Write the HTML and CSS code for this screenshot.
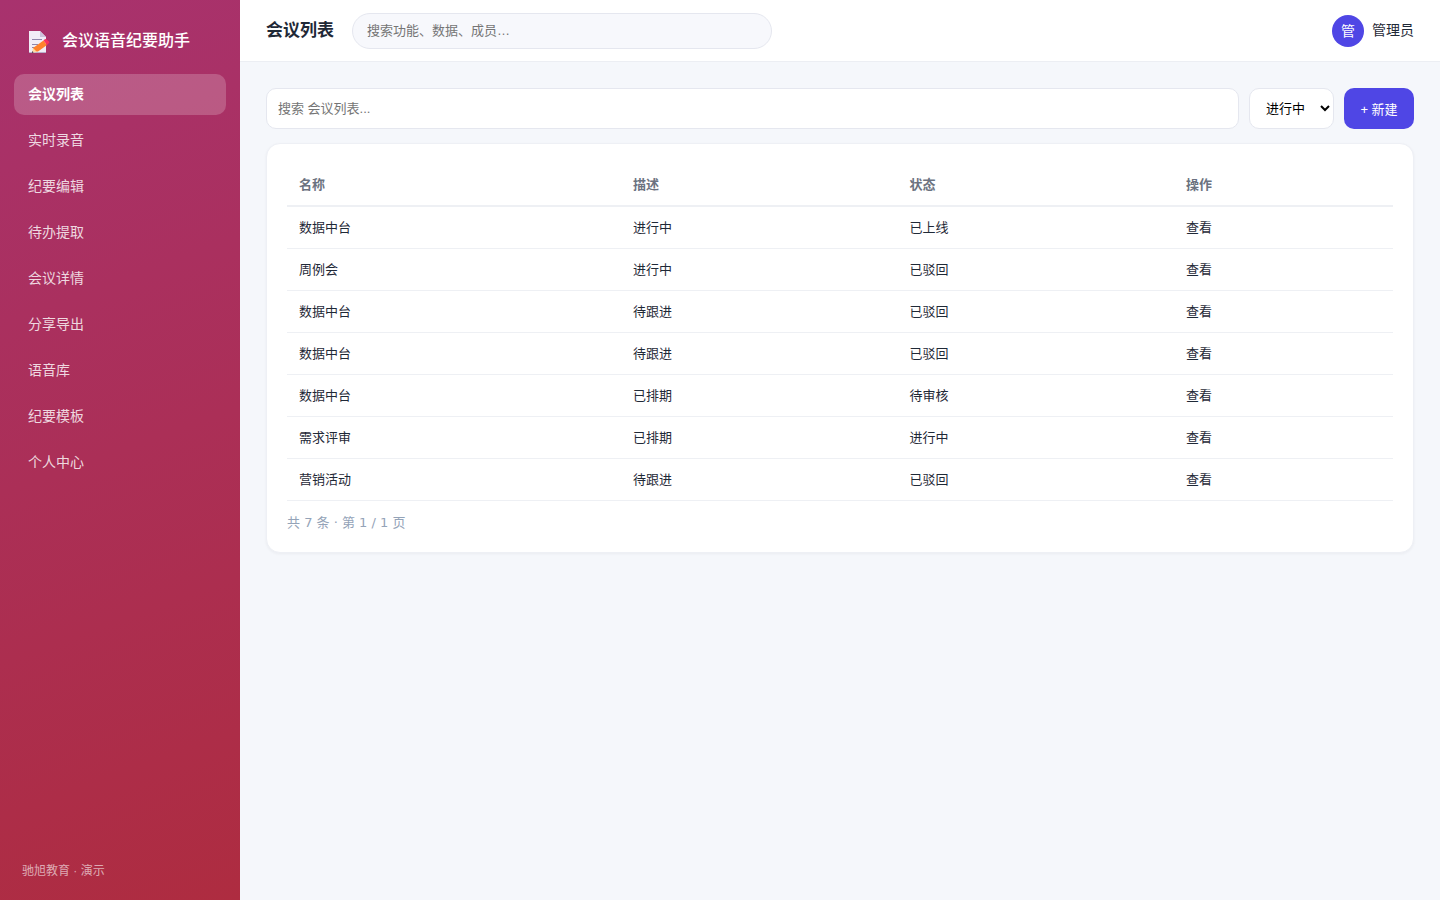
FILE: index.html
```html
<!DOCTYPE html>
<html lang="zh-CN">
<head>
  <meta charset="UTF-8">
  <meta name="viewport" content="width=device-width, initial-scale=1">
  <title>会议语音纪要助手</title>
  <link rel="stylesheet" href="styles.css">
</head>
<body>

  <div class="app">
    <aside class="sidebar">
      <div class="brand">
        <svg class="brand-icon" viewBox="0 0 22 24" aria-hidden="true">
          <path d="M1 1h11l6 6v16H1z" fill="#f1edf8"/>
          <path d="M12 1l6 6h-6z" fill="#cdc3dc"/>
          <path d="M1 22h17v1H1z" fill="#b9aecb"/>
          <path d="M4 9.500h10M4 14.500h6M4 17.500h4" stroke="#8f86ad" stroke-width="1" fill="none"/>
          <path d="M5 18l10.500-7.500 3.500 4.500-9 6.500-5 .5z" fill="#ff822d"/>
          <path d="M5 18l4 4-5 .8z" fill="#ffd9a0"/>
          <path d="M4.400 20.900l1.200 1.500-1.800.5z" fill="#38304a"/>
          <path d="M15.500 10.500l1.300-1.200q.8-.6 1.500 0l2.700 2.200q.7.700 0 1.500l-2 2z" fill="#f8315f"/>
        </svg>
        <span>会议语音纪要助手</span>
      </div>
      <nav class="nav">
        <a class="active" href="#">会议列表</a>
        <a href="#">实时录音</a>
        <a href="#">纪要编辑</a>
        <a href="#">待办提取</a>
        <a href="#">会议详情</a>
        <a href="#">分享导出</a>
        <a href="#">语音库</a>
        <a href="#">纪要模板</a>
        <a href="#">个人中心</a>
      </nav>
      <div class="side-foot">驰旭教育 · 演示</div>
    </aside>

    <div class="main">
      <header class="topbar">
        <h1>会议列表</h1>
        <input class="global-search" type="search" placeholder="搜索功能、数据、成员…" aria-label="全局搜索">
        <div class="user">
          <span class="avatar">管</span>
          <span>管理员</span>
        </div>
      </header>

      <main class="content">
        <div class="toolbar">
          <input type="text" placeholder="搜索 会议列表..." aria-label="搜索会议列表">
          <select aria-label="状态">
            <option>进行中</option>
            <option>待跟进</option>
            <option>已排期</option>
          </select>
          <button class="btn" type="button">+ 新建</button>
        </div>

        <section class="card">
          <table>
            <thead>
              <tr><th class="col-name">名称</th><th class="col-mid">描述</th><th class="col-mid">状态</th><th>操作</th></tr>
            </thead>
            <tbody>
              <tr><td>数据中台</td><td>进行中</td><td>已上线</td><td>查看</td></tr>
              <tr><td>周例会</td><td>进行中</td><td>已驳回</td><td>查看</td></tr>
              <tr><td>数据中台</td><td>待跟进</td><td>已驳回</td><td>查看</td></tr>
              <tr><td>数据中台</td><td>待跟进</td><td>已驳回</td><td>查看</td></tr>
              <tr><td>数据中台</td><td>已排期</td><td>待审核</td><td>查看</td></tr>
              <tr><td>需求评审</td><td>已排期</td><td>进行中</td><td>查看</td></tr>
              <tr><td>营销活动</td><td>待跟进</td><td>已驳回</td><td>查看</td></tr>
            </tbody>
          </table>
          <div class="pager">共 7 条 · 第 1 / 1 页</div>
        </section>
      </main>
    </div>
  </div>

</body>
</html>
```
FILE: styles.css
```css
* { box-sizing: border-box; }
body {
  margin: 0;
  font-family: "Liberation Sans", "Noto Sans CJK SC", sans-serif;
  font-size: 14px;
  line-height: 21px;
  color: #1f2937;
  background: #f5f7fb;
}
input, select, button {
  font-family: inherit;
}
.app {
  display: flex;
  min-height: 100vh;
}

/* sidebar */
.sidebar {
  width: 240px;
  flex-shrink: 0;
  display: flex;
  flex-direction: column;
  padding: 22px 14px 18px;
  color: #fff;
  background: linear-gradient(160deg, #a8326e, #ae2c40);
}
.brand {
  display: flex;
  align-items: center;
  gap: 12px;
  height: 36px;
  padding: 0 14px;
  margin-bottom: 16px;
  font-size: 16px;
  font-weight: 500;
}
.brand-icon {
  width: 22px;
  height: 24px;
  margin-top: 4px;
}
.nav {
  display: flex;
  flex-direction: column;
  gap: 5px;
}
.nav a {
  padding: 10px 14px;
  border-radius: 10px;
  color: rgba(255, 255, 255, 0.82);
  text-decoration: none;
}
.nav a.active {
  background: rgba(255, 255, 255, 0.2);
  color: #fff;
  font-weight: 700;
}
.side-foot {
  margin-top: auto;
  padding: 0 8px;
  font-size: 12px;
  color: rgba(255, 255, 255, 0.6);
}

/* topbar */
.main {
  flex: 1;
  min-width: 0;
}
.topbar {
  display: flex;
  align-items: center;
  gap: 18px;
  height: 62px;
  padding: 0 26px;
  background: #fff;
  border-bottom: 1px solid #eceef3;
}
.topbar h1 {
  margin: 0;
  font-size: 17px;
  font-weight: 700;
}
.global-search {
  flex: 0 1 420px;
  min-width: 0;
  height: 36px;
  padding: 0 14px;
  font-size: 13px;
  border: 1px solid #e5e7ef;
  border-radius: 18px;
  background: #f7f8fc;
}
.user {
  display: flex;
  align-items: center;
  gap: 8px;
  margin-left: auto;
}
.avatar {
  width: 32px;
  height: 32px;
  line-height: 32px;
  border-radius: 50%;
  text-align: center;
  color: #fff;
  background: #4f46e5;
}

/* list page */
.content {
  padding: 26px;
}
.toolbar {
  display: flex;
  gap: 10px;
  margin-bottom: 14px;
}
.toolbar input,
.toolbar select {
  height: 41px;
  border: 1px solid #e5e7ef;
  border-radius: 10px;
  background: #fff;
  font-size: 13px;
}
.toolbar input {
  flex: 1;
  min-width: 0;
  padding: 0 11px;
}
.toolbar select {
  width: 85px;
  padding: 0 0 0 12px;
  color: #000;
}
.btn {
  min-width: 70px;
  padding: 0 16px;
  border: none;
  border-radius: 10px;
  font-size: 13px;
  color: #fff;
  background: #4f46e5;
  cursor: pointer;
}
.card {
  padding: 20px;
  border: 1px solid #eef0f5;
  border-radius: 14px;
  background: #fff;
  box-shadow: 0 1px 3px rgba(31, 41, 55, 0.05);
}
table {
  width: 100%;
  border-collapse: separate;
  border-spacing: 0;
  font-size: 13px;
}
th, td {
  padding: 11px 12px;
  line-height: 19px;
  text-align: left;
}
th {
  font-weight: 600;
  color: #6b7280;
  border-bottom: 2px solid #eef0f4;
}
td {
  border-bottom: 1px solid #eef0f4;
}
.col-name { width: 30.2%; }
.col-mid { width: 25%; }
.pager {
  padding-top: 12px;
  font-family: "DejaVu Sans", "Noto Sans CJK SC", sans-serif;
  line-height: 19px;
  font-size: 13px;
  color: #94a3b8;
}
```
